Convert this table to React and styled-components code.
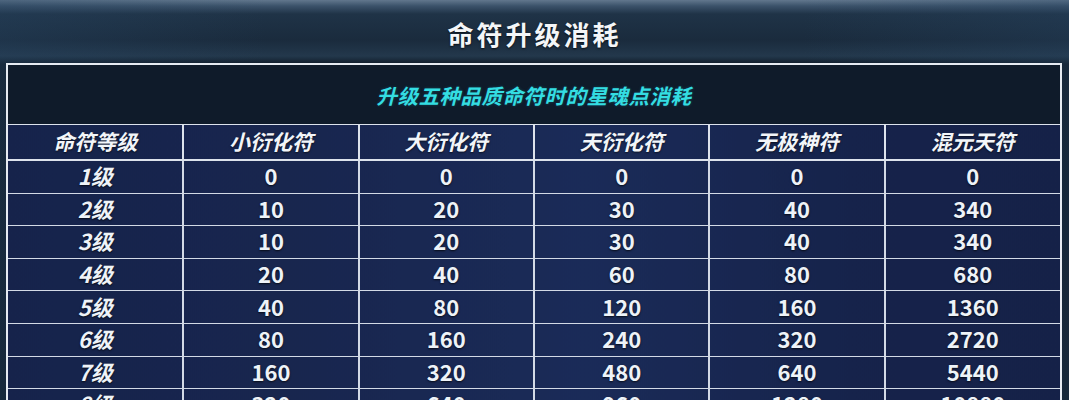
import React from "react";
import styled, { createGlobalStyle } from "styled-components";

const Global = createGlobalStyle`
  html, body { margin: 0; padding: 0; }
  body {
    width: 1069px;
    height: 400px;
    overflow: hidden;
    background: #0e1a27;
    font-family: "Noto Sans CJK SC", "Noto Sans", sans-serif;
  }
`;

const Page = styled.div`
  width: 1069px;
  height: 400px;
  overflow: hidden;
  background:
    linear-gradient(90deg, rgba(40, 70, 100, 0.35) 0%, rgba(0, 0, 0, 0) 25%, rgba(0, 0, 0, 0) 75%, rgba(40, 70, 100, 0.3) 100%),
    linear-gradient(180deg, #62778d 0px, #3b526a 6px, #1f3347 14px, #1a2b3d 40px, #23384c 56px, #101c2a 64px, #0e1a27 100%);
`;

const TitleBar = styled.div`
  height: 63px;
  display: flex;
  align-items: center;
  justify-content: center;
  padding-top: 4px;
  box-sizing: border-box;
`;

const Title = styled.h1`
  margin: 0;
  font-size: 26px;
  font-weight: 600;
  letter-spacing: 3px;
  color: #f4f6f8;
  text-shadow: 0 1px 2px rgba(0, 0, 0, 0.7);
`;

const Frame = styled.div`
  margin: 0 7px 0 6px;
  border: 2px solid #e6ebf2;
  border-bottom: none;
  background: #0f1b2a;
`;

const Caption = styled.div`
  height: 59px;
  display: flex;
  align-items: center;
  justify-content: center;
  font-size: 20.5px;
  font-weight: 700;
  font-style: italic;
  color: #34dde2;
  letter-spacing: 0.5px;
  text-shadow: 0 0 3px rgba(40, 200, 220, 0.25);
`;

const Table = styled.table`
  width: 100%;
  border-collapse: collapse;
  table-layout: fixed;
  background: linear-gradient(90deg, #16234b 0%, #18264f 30%, #1a2b58 55%, #16234b 80%, #152148 100%);
`;

const HeadCell = styled.th`
  height: 32px;
  padding: 0 0 2px;
  border: 2px solid #dde3ec;
  border-top-width: 1px;
  font-size: 21px;
  font-weight: 700;
  font-style: italic;
  color: #f2f5f9;
  text-align: center;
  line-height: 1;
  text-shadow: 0 1px 2px rgba(0, 0, 0, 0.6);
  &:first-child { border-left: none; }
  &:last-child { border-right: none; }
`;

const Cell = styled.td`
  height: 28.6px;
  padding: 0 0 3px;
  border: 2px solid #d3dae6;
  border-top-width: 1px;
  border-bottom-width: 1px;
  font-size: 22px;
  font-weight: 600;
  font-style: ${(p) => (p.$label ? "italic" : "normal")};
  color: #eef3f8;
  text-align: center;
  line-height: 1;
  text-shadow: 0 1px 2px rgba(0, 0, 0, 0.7);
  &:first-child { border-left: none; }
  &:last-child { border-right: none; }
`;

const headers = ["命符等级", "小衍化符", "大衍化符", "天衍化符", "无极神符", "混元天符"];
const rows = [
  ["1级", 0, 0, 0, 0, 0],
  ["2级", 10, 20, 30, 40, 340],
  ["3级", 10, 20, 30, 40, 340],
  ["4级", 20, 40, 60, 80, 680],
  ["5级", 40, 80, 120, 160, 1360],
  ["6级", 80, 160, 240, 320, 2720],
  ["7级", 160, 320, 480, 640, 5440],
  ["8级", 320, 640, 960, 1280, 10880],
];

export default function App() {
  return (
    <>
      <Global />
      <Page>
        <TitleBar>
          <Title>命符升级消耗</Title>
        </TitleBar>
        <Frame>
          <Caption>升级五种品质命符时的星魂点消耗</Caption>
          <Table>
            <thead>
              <tr>
                {headers.map((h) => (
                  <HeadCell key={h}>{h}</HeadCell>
                ))}
              </tr>
            </thead>
            <tbody>
              {rows.map((r) => (
                <tr key={r[0]}>
                  {r.map((v, i) => (
                    <Cell key={i} $label={i === 0}>
                      {v}
                    </Cell>
                  ))}
                </tr>
              ))}
            </tbody>
          </Table>
        </Frame>
      </Page>
    </>
  );
}
